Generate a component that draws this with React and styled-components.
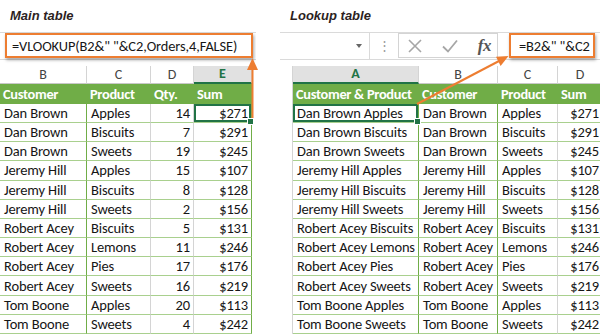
import React from "react";
import styled, { createGlobalStyle } from "styled-components";

const Global = createGlobalStyle`
  body { margin: 0; background: #fff; }
  #root { width: 600px; height: 334px; overflow: hidden; }
`;

const GREEN = "#70ad47";
const DARK = "#217346";
const ORANGE = "#ed7d31";
const GRID = "#d4d4d4";
const ROWLINE = "#a9d08e";

const Page = styled.div`
  position: relative;
  display: flex;
  width: 600px;
  height: 334px;
  overflow: hidden;
  font-family: Carlito, Lato, "Liberation Sans", sans-serif;
  color: #161616;
`;

const Panel = styled.div`
  flex-shrink: 0;
  width: ${({ w }) => w}px;
  margin-left: ${({ ml }) => ml || 0}px;
  display: flex;
  flex-direction: column;
  overflow: hidden;
`;

const Title = styled.div`
  height: 32px;
  padding-left: ${({ pl }) => pl}px;
  display: flex;
  align-items: center;
  font: italic bold 13px "Liberation Sans", Arial, sans-serif;
  color: #2d1f1f;
`;

const FormulaBar = styled.div`
  height: 28px;
  box-sizing: border-box;
  border-top: 1px solid #dadada;
  border-bottom: 1px solid #dadada;
  display: flex;
  align-items: center;
`;

const FormulaBox = styled.div`
  box-sizing: border-box;
  height: 25px;
  width: ${({ w }) => w}px;
  margin-left: ${({ ml }) => ml}px;
  border: 2px solid ${ORANGE};
  box-shadow: 1px 2px 3px rgba(0, 0, 0, 0.35);
  background: #fff;
  display: flex;
  align-items: center;
  padding-left: ${({ pl }) => pl}px;
  font-size: 14.4px;
  letter-spacing: -0.1px;
  white-space: nowrap;
`;

const NameBox = styled.div`
  width: 90px;
  align-self: stretch;
  box-sizing: border-box;
  border-right: 1px solid #dadada;
  display: flex;
  align-items: center;
  justify-content: flex-end;
  padding-right: 7px;
`;

const Caret = styled.span`
  width: 0;
  height: 0;
  border-left: 3.5px solid transparent;
  border-right: 3.5px solid transparent;
  border-top: 4px solid #666;
`;

const Dots = styled.span`
  width: 28px;
  text-align: center;
  color: #9a9a9a;
  font-size: 13px;
  line-height: 1;
`;

const ButtonBox = styled.div`
  box-sizing: border-box;
  width: 100px;
  height: 25px;
  border: 1px solid ${GRID};
  display: flex;
  align-items: center;
  justify-content: space-between;
  padding: 0 6px 0 9px;
`;

const Fx = styled.span`
  font: italic bold 17px "Liberation Serif", "Times New Roman", serif;
  color: #555;
  letter-spacing: -0.5px;
`;

const Sheet = styled.div`
  margin-top: 6px;
  margin-left: ${({ ml }) => ml || 0}px;
  display: grid;
  grid-template-columns: ${({ cols }) => cols};
  border-left: ${({ edge }) => (edge ? `1px solid ${GRID}` : "none")};
`;

const Letter = styled.div`
  height: 18px;
  box-sizing: border-box;
  border-right: 1px solid ${GRID};
  border-bottom: ${({ on }) => (on ? `2px solid ${DARK}` : `1px solid #c8c8c8`)};
  background: ${({ on }) => (on ? "#e1e1e1" : "#fff")};
  color: ${({ on }) => (on ? DARK : "#444")};
  font-weight: ${({ on }) => (on ? 700 : 400)};
  font-size: 14px;
  display: flex;
  align-items: center;
  justify-content: center;
`;

const Head = styled.div`
  height: 20px;
  box-sizing: border-box;
  background: ${GREEN};
  color: #fff;
  font-weight: 700;
  font-size: 14.4px;
  letter-spacing: -0.3px;
  padding-left: 3px;
  display: flex;
  align-items: center;
  white-space: nowrap;
  overflow: hidden;
`;

const Cell = styled.div`
  position: relative;
  height: 19.2px;
  box-sizing: border-box;
  border-bottom: 1px solid ${ROWLINE};
  border-right: 1px solid ${({ line }) => line};
  padding: 0 ${({ right }) => (right ? "3px" : "0")} 0 ${({ right }) => (right ? "0" : "4px")};
  display: flex;
  align-items: center;
  justify-content: ${({ right }) => (right ? "flex-end" : "flex-start")};
  font-size: 14.5px;
  letter-spacing: -0.15px;
  white-space: nowrap;
  box-shadow: ${({ sel }) => (sel ? `inset 0 0 0 2px ${DARK}` : "none")};
  &::after {
    content: "";
    display: ${({ sel }) => (sel ? "block" : "none")};
    position: absolute;
    right: -3px;
    bottom: -3px;
    width: 5px;
    height: 5px;
    background: ${DARK};
    border: 1px solid #fff;
    z-index: 2;
  }
`;

const Overlay = styled.svg`
  position: absolute;
  left: 0;
  top: 0;
  pointer-events: none;
`;

const orders = [
  ["Dan Brown", "Apples", 14, 271],
  ["Dan Brown", "Biscuits", 7, 291],
  ["Dan Brown", "Sweets", 19, 245],
  ["Jeremy Hill", "Apples", 15, 107],
  ["Jeremy Hill", "Biscuits", 8, 128],
  ["Jeremy Hill", "Sweets", 2, 156],
  ["Robert Acey", "Biscuits", 5, 131],
  ["Robert Acey", "Lemons", 11, 246],
  ["Robert Acey", "Pies", 17, 176],
  ["Robert Acey", "Sweets", 16, 219],
  ["Tom Boone", "Apples", 20, 113],
  ["Tom Boone", "Sweets", 4, 242],
];

const MainTable = () => (
  <Sheet cols="87px 64px 43px 58px">
    <Letter>B</Letter>
    <Letter>C</Letter>
    <Letter>D</Letter>
    <Letter on>E</Letter>
    <Head>Customer</Head>
    <Head>Product</Head>
    <Head>Qty.</Head>
    <Head>Sum</Head>
    {orders.map(([c, p, q, s], i) => (
      <React.Fragment key={i}>
        <Cell line={GREEN}>{c}</Cell>
        <Cell line={GRID}>{p}</Cell>
        <Cell line={GRID} right>{q}</Cell>
        <Cell line={GREEN} right sel={i === 0}>${s}</Cell>
      </React.Fragment>
    ))}
  </Sheet>
);

const LookupTable = () => (
  <Sheet cols="126px 79px 60px 45px" ml={12} edge>
    <Letter on>A</Letter>
    <Letter>B</Letter>
    <Letter>C</Letter>
    <Letter>D</Letter>
    <Head>Customer &amp; Product</Head>
    <Head>Customer</Head>
    <Head>Product</Head>
    <Head>Sum</Head>
    {orders.map(([c, p, , s], i) => (
      <React.Fragment key={i}>
        <Cell line={GREEN} sel={i === 0}>{c} {p}</Cell>
        <Cell line={GREEN}>{c}</Cell>
        <Cell line={GRID}>{p}</Cell>
        <Cell line={GRID} right>${s}</Cell>
      </React.Fragment>
    ))}
  </Sheet>
);

const Arrows = () => (
  <Overlay width="600" height="334" viewBox="0 0 600 334">
    <g stroke={ORANGE} strokeWidth="2" fill={ORANGE}>
      <line x1="252.5" y1="120" x2="252.5" y2="66" />
      <polygon points="252.5,58 247,70 258,70" stroke="none" />
      <line x1="417" y1="104" x2="500" y2="60.5" />
      <polygon points="508.5,56 496,56.7 500.6,66" stroke="none" />
    </g>
  </Overlay>
);

export default function App() {
  return (
    <Page>
      <Global />
      <Panel w={256}>
        <Title pl={10}>Main table</Title>
        <FormulaBar>
          <FormulaBox w={248} ml={5} pl={5}>
            =VLOOKUP(B2&amp;" "&amp;C2,Orders,4,FALSE)
          </FormulaBox>
        </FormulaBar>
        <MainTable />
      </Panel>
      <Panel w={320} ml={24}>
        <Title pl={10}>Lookup table</Title>
        <FormulaBar>
          <NameBox>
            <Caret />
          </NameBox>
          <Dots>⋮</Dots>
          <ButtonBox>
            <svg width="14" height="14" viewBox="0 0 14 14">
              <path d="M1 1L13 13M13 1L1 13" stroke="#a6a6a6" strokeWidth="1.6" fill="none" />
            </svg>
            <svg width="16" height="14" viewBox="0 0 16 14">
              <path d="M1 7.5L6 12.5L15 1.5" stroke="#a6a6a6" strokeWidth="1.8" fill="none" />
            </svg>
            <Fx>fx</Fx>
          </ButtonBox>
          <FormulaBox w={86} ml={11} pl={8}>
            =B2&amp;" "&amp;C2
          </FormulaBox>
        </FormulaBar>
        <LookupTable />
      </Panel>
      <Arrows />
    </Page>
  );
}
